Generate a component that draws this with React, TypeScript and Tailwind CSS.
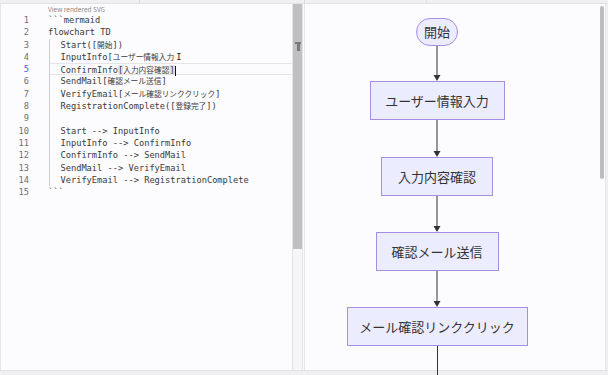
import React from "react";

const mono = { fontFamily: '"DejaVu Sans Mono", "Noto Sans CJK JP", monospace' };
const cjk = { fontFamily: '"Noto Sans CJK JP", "Noto Sans", sans-serif' };

const body = [
  "  Start([開始])",
  "  InputInfo[ユーザー情報入力",
  "  ConfirmInfo[入力内容確認]",
  "  SendMail[確認メール送信]",
  "  VerifyEmail[メール確認リンククリック]",
  "  RegistrationComplete([登録完了])",
  "",
  "  Start --> InputInfo",
  "  InputInfo --> ConfirmInfo",
  "  ConfirmInfo --> SendMail",
  "  SendMail --> VerifyEmail",
  "  VerifyEmail --> RegistrationComplete",
];

// CJK glyphs in the editor render a bit narrower than the mono cells
function Txt({ t }: { t: string }) {
  const parts = t.split(/([\u3000-\u9fff\u30a0-\u30ff]+)/);
  return (
    <>
      {parts.map((p, i) =>
        i % 2 === 1 ? (
          <span key={i} className="text-[7.7px]" style={cjk}>
            {p}
          </span>
        ) : (
          <React.Fragment key={i}>{p}</React.Fragment>
        )
      )}
    </>
  );
}

function Line({ children, active }: { children?: React.ReactNode; active?: boolean }) {
  return (
    <div
      className={
        "h-[12.3px] leading-[12.3px] whitespace-pre text-[#3a3a3a] " +
        (active ? "border-y border-[#e6e4e8]" : "")
      }
    >
      {children}
    </div>
  );
}

function Arrow({ h }: { h: number }) {
  return (
    <svg width="10" height={h} className="block">
      <line x1="5" y1="0" x2="5" y2={h - 5} stroke="#333" strokeWidth="1" />
      <path d={`M1.5 ${h - 6} L8.5 ${h - 6} L5 ${h} Z`} fill="#333" />
    </svg>
  );
}

function Node({ label, w }: { label: string; w: string }) {
  return (
    <div
      className={
        "h-[39px] flex items-center justify-center bg-[#ececff] border border-[#a68ee0] text-[13px] text-[#333] " +
        w
      }
      style={cjk}
    >
      {label}
    </div>
  );
}

export default function App() {
  return (
    <div className="w-[608px] h-[375px] bg-[#f0eff1] flex flex-col overflow-hidden">
      {/* top strip */}
      <div className="h-[3px] flex">
        <div className="w-[140px] border-r border-[#dcdcdc]" />
        <div className="w-[165px] border-r border-[#dcdcdc]" />
        <div className="w-[122px] border-r border-[#dcdcdc]" />
        <div className="flex-1" />
      </div>

      <div className="flex h-[368px] border-y border-[#e2e1e4]">
        {/* editor */}
        <div className="w-[304px] flex bg-[#fcfbfd] border-l border-[#e6e5e8]">
          <div className="w-[291px]" style={mono}>
            <div className="h-[10px] pl-[47px] text-[6.5px] leading-[10px] text-[#8a8a8a]" style={cjk}>
              View rendered SVG
            </div>
            <div className="flex text-[8.7px]">
              <div className="w-[28px] text-right text-[#707070]">
                {Array.from({ length: 15 }, (_, i) => (
                  <div
                    key={i}
                    className={"h-[12.3px] leading-[12.3px] " + (i === 4 ? "text-[#3b63d6]" : "")}
                  >
                    {i + 1}
                  </div>
                ))}
              </div>
              <div className="flex-1 pl-[19px]">
                <Line>```mermaid</Line>
                <Line>flowchart TD</Line>
                <div className="ml-[1px] border-l border-[#cfcdd2]">
                  {body.map((t, i) => {
                    if (i === 1)
                      return (
                        <Line key={i}>
                          <Txt t={t} />
                          <span className="text-[#222] ml-[2px]">I</span>
                        </Line>
                      );
                    if (i === 2)
                      return (
                        <Line key={i} active>
                          {"  ConfirmInfo"}
                          <span className="bg-[#e3e2e6]">[</span>
                          <Txt t="入力内容確認" />
                          <span className="bg-[#e3e2e6]">]</span>
                          <span className="inline-block w-[1.5px] h-[10px] bg-[#111] align-middle" />
                        </Line>
                      );
                    return (
                      <Line key={i}>
                        <Txt t={t} />
                      </Line>
                    );
                  })}
                </div>
                <Line>```</Line>
              </div>
            </div>
          </div>
          {/* scrollbar */}
          <div className="w-[11px] bg-[#f6f5f7] border-x border-[#e4e3e6] flex flex-col">
            <div className="h-[245px] bg-[#c0bfc2] relative">
              <div className="absolute left-[2px] top-[38px] w-[6px] h-[2px] bg-[#7a797c]" />
              <div className="absolute left-[3.5px] top-[40px] w-[3px] h-[7px] bg-[#7a797c]" />
            </div>
          </div>
        </div>

        {/* preview */}
        <div className="flex-1 flex bg-[#fcfbfe] border-l border-[#e6e5e8] mr-[2px] border-r">
          <div className="flex-1 pt-[14px]">
            <div className="w-[260px] ml-[2px] flex flex-col items-center">
              <div
                className="h-[28px] px-[7px] rounded-full flex items-center bg-[#ececff] border border-[#a68ee0] text-[13px] text-[#333]"
                style={cjk}
              >
                開始
              </div>
              <Arrow h={35} />
              <Node label="ユーザー情報入力" w="w-[135px]" />
              <Arrow h={37} />
              <Node label="入力内容確認" w="w-[112px]" />
              <Arrow h={36} />
              <Node label="確認メール送信" w="w-[123px]" />
              <Arrow h={36} />
              <Node label="メール確認リンククリック" w="w-[181px]" />
              <div className="w-px h-[40px] bg-[#333]" />
            </div>
          </div>
          <div className="w-[7px] pt-[2px] pl-[2px]">
            <div className="w-[4px] h-[173px] bg-[#bdbcbf] rounded-sm" />
          </div>
        </div>
      </div>
    </div>
  );
}
